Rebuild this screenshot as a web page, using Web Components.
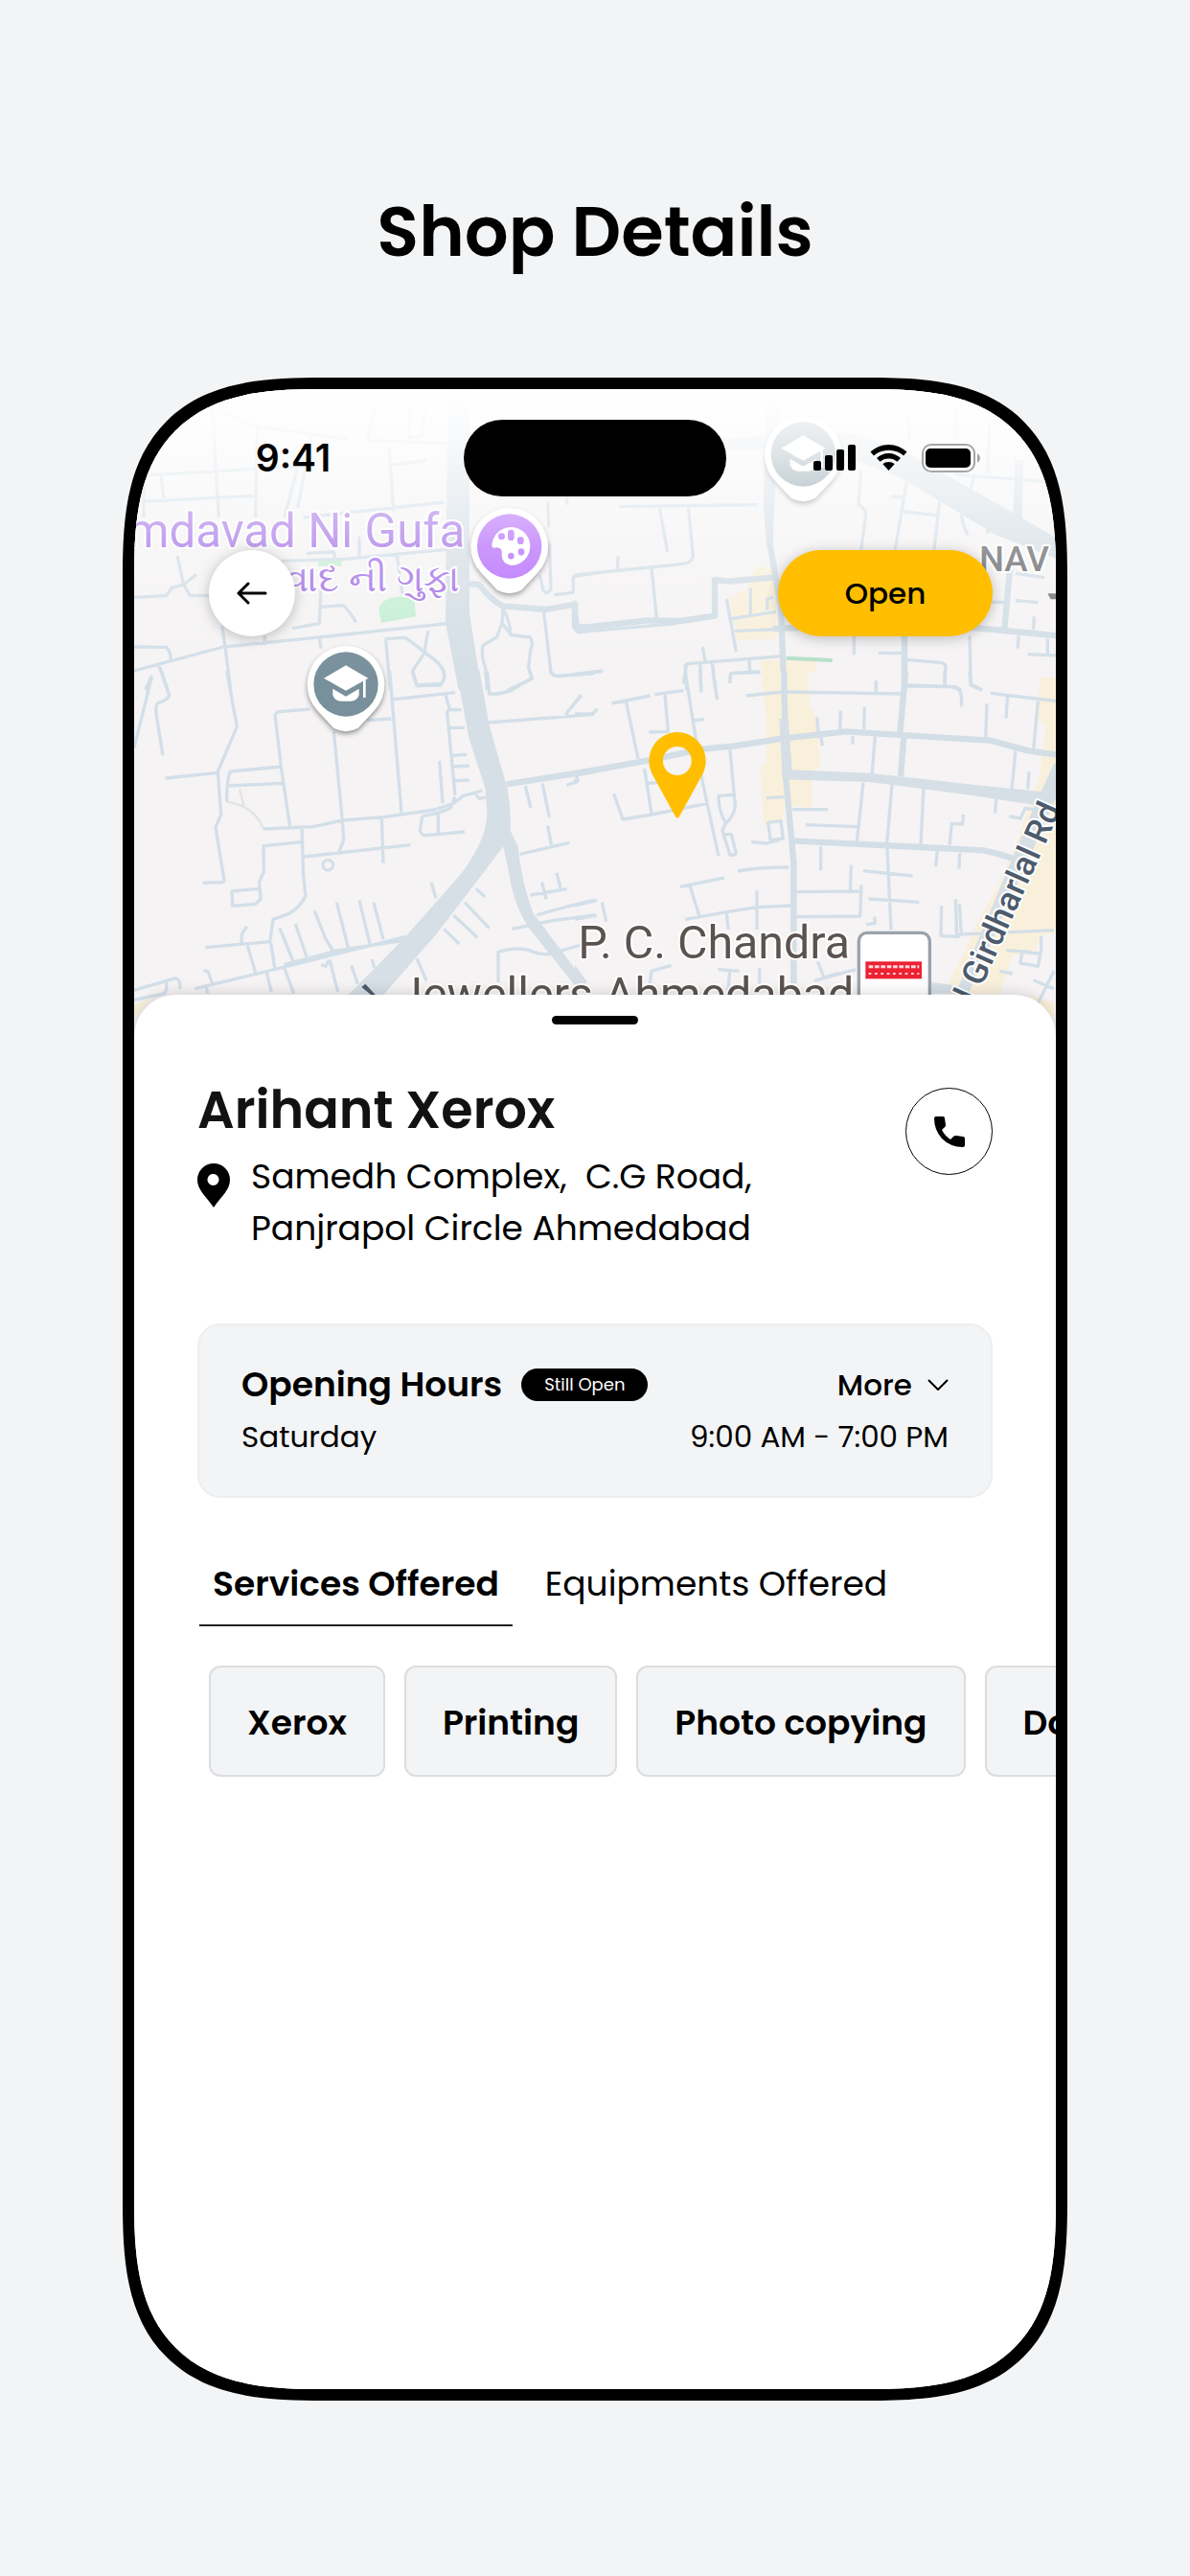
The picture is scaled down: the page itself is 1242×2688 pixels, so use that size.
<!DOCTYPE html>
<html lang="en">
<head>
<meta charset="utf-8">
<meta name="viewport" content="width=device-width, initial-scale=1">
<title>Shop Details</title>
<style>
  body {
    margin: 0;
    background: #f3f4f6;
    color: #000;
    font-family: Poppins, Inter, sans-serif;
  }
</style>
</head>
<body>

<shop-page>
  <span slot="title">Shop Details</span>
  <phone-frame>
    <map-hero>
      <status-bar slot="status" time="9:41"></status-bar>
      <back-button slot="start"></back-button>
      <open-pill slot="end">Open</open-pill>
    </map-hero>
    <bottom-sheet>
      <shop-header name="Arihant Xerox">
        <span>Samedh Complex,&nbsp; C.G Road,<br>Panjrapol Circle Ahmedabad</span>
      </shop-header>
      <hours-card day="Saturday" hours="9:00 AM - 7:00 PM" badge="Still Open"></hours-card>
      <tab-bar>
        <tab-item selected>Services Offered</tab-item>
        <tab-item>Equipments Offered</tab-item>
      </tab-bar>
      <chip-row>
        <service-chip>Xerox</service-chip>
        <service-chip>Printing</service-chip>
        <service-chip>Photo copying</service-chip>
        <service-chip>Do</service-chip>
      </chip-row>
    </bottom-sheet>
  </phone-frame>
</shop-page>

<script>
// Base: every element only gives its template
class BaseElement extends HTMLElement {
  connectedCallback(){
    if (this.shadowRoot) return;
    this.attachShadow({mode: 'open'});
    const template = document.createElement('template');
    template.innerHTML = `<style>* { box-sizing: border-box; } button { font: inherit; color: inherit; border: 0; margin: 0; cursor: pointer; } svg { display: block; }</style>${this.getTemplate()}`;
    this.shadowRoot.appendChild(template.content.cloneNode(true));
  }
}

// PAGE
class ShopPage extends BaseElement {
  getTemplate(){
    return `
    <style>
      :host {
        display: flex;
        flex-direction: column;
        box-sizing: border-box;
        min-height: 100vh;
        padding: 197px 128px 183px;
        gap: 107px;
      }
      h1 {
        margin: 0;
        text-align: center;
        font-size: 72px;
        line-height: 90px;
        font-weight: 600;
      }
      ::slotted(phone-frame) { flex: 1; }
    </style>
    <h1><slot name="title"></slot></h1>
    <slot></slot>
    `
  }
}
customElements.define('shop-page', ShopPage);

class PhoneFrame extends BaseElement {
  getTemplate(){
    return `
    <style>
      :host {
        display: flex;
        flex-direction: column;
        box-sizing: border-box;
        border: 12px solid #000;
        border-radius: 160px;
        background: #fff;
        overflow: hidden;
      }
      @supports (corner-shape: superellipse(1.5)) {
        :host {
          border-radius: 210px;
          corner-shape: superellipse(1.5);
        }
      }
    </style>
    <slot></slot>
    `
  }
}
customElements.define('phone-frame', PhoneFrame);

// MAP
class MapHero extends BaseElement {
  getTemplate(){
    return `
    <style>
      :host {
        display: block;
        position: relative;
        height: 680px;
      }
      city-map {
        position: absolute;
        inset: 0;
      }
      .over { position: relative; }
      .actions {
        display: flex;
        justify-content: space-between;
        margin-top: 56px;
        padding: 0 66px 0 78px;
      }
    </style>
    <city-map></city-map>
    <div class="over">
      <slot name="status"></slot>
      <div class="actions">
        <slot name="start"></slot>
        <slot name="end"></slot>
      </div>
    </div>
    `
  }
}
customElements.define('map-hero', MapHero);

class CityMap extends BaseElement {
  getTemplate(){
    return `
    <style>
      :host { display: block; background: #f5f3f4; overflow: hidden; }
      svg { width: 100%; height: 100%; }
      .road { fill: none; stroke: #d3dfe8; stroke-width: 10; stroke-linejoin: round; }
      .mid { fill: none; stroke: #d3dee6; stroke-width: 19; stroke-linejoin: round; }
      .main { fill: #d6dfe6; }
      .area { fill: #f9f0dc; }
      .park { fill: #c7efd5; }
      text { paint-order: stroke; stroke: #fff; stroke-width: 12; stroke-linejoin: round; font-family: Roboto, "Noto Sans", sans-serif; }
      .place { font-size: 145px; fill: #5b5350; }
      .art { font-size: 148px; fill: #a777e6; }
      .art-local { font-size: 118px; fill: #a777e6; font-weight: 500; }
      .district { font-size: 110px; fill: #6c6e72; font-weight: 500; }
      .street { font-size: 106px; fill: #4d5b6c; font-weight: 500; }
      .pin { filter: drop-shadow(0 8px 8px rgba(0, 0, 0, .4)); }
    </style>
    <svg viewBox="0 0 2886 2040" preserveAspectRatio="xMidYMid slice" role="img" aria-label="Map">
      <defs>
        <linearGradient id="fade" x1="0" y1="0" x2="0" y2="1">
          <stop offset="0" stop-color="#fff"/>
          <stop offset=".24" stop-color="#fff" stop-opacity=".74"/>
          <stop offset=".55" stop-color="#fff" stop-opacity=".28"/>
          <stop offset=".8" stop-color="#fff" stop-opacity=".08"/>
          <stop offset="1" stop-color="#fff" stop-opacity="0"/>
        </linearGradient>
        <path id="drop" fill="#fff" d="M-87 85 L-38 137 Q0 158 38 137 L87 85 A121 121 0 1 0 -87 85Z"/>
        <g id="school">
          <use href="#drop" class="pin"/>
          <circle r="101" fill="#78909c"/>
          <path fill="#fff" d="M-69 -19 L0 -59 L70 -19 L0 20Z M-41 14 L0 38 L41 14 V34 Q35 53 15 53 H-15 Q-35 53 -41 34Z M54 -16 H62 V42 H54Z"/>
        </g>
      </defs>

      <!-- top left -->
      <g transform="translate(-60 -78)">
        <path class="park" d="M636 614 L710 612 V632 H636Z M826 770 Q830 735 880 730 L936 722 L942 790 L834 810Z"/>
        <path class="road" d="M305 130 L325 480 M320 140 L440 195 L730 235 M445 190 L440 480 M60 350 L615 318 M145 350 L152 420 M90 360 V480 M90 430 L440 412 M615 230 L572 450 M570 330 L530 480 M858 265 L872 460 M866 315 L975 302 M590 480 L1030 432 M822 110 L790 238 L1040 248 M925 120 L920 230 L960 226 L972 120 M600 592 L685 588 L690 610 M765 540 V600 M520 616 L720 610 L1040 580 M882 590 L900 720 M1355 430 L1358 510 M1415 400 V440 M195 600 L215 690 L255 658 M215 690 L178 700 L160 725 L60 730 M215 690 L235 725 H300 M645 700 L640 812 L555 827 M645 760 L715 755 Q725 760 755 808 M60 885 L160 886 Q175 900 175 925 M60 960 L340 885 L640 855 L1040 812 M335 820 L345 885 L362 1020 M470 850 L466 880 M640 855 L645 890 M135 935 L165 1020 M115 975 L95 1020 M845 860 L910 856 L1000 925 Q1035 950 1030 985 L1020 1005 L945 1007 L932 960 L968 905 L980 835 M848 862 L862 1020 M1330 660 L1340 705 Q1350 725 1365 705 L1360 560 M1375 722 L1435 715 V665 L1500 655 M1215 765 L1212 810 L1240 848 L1300 855 Q1312 870 1300 900 L1295 950 L1306 985 L1230 1020 M1215 765 Q1235 800 1240 848 M1212 810 L1195 855 L1152 880 Q1145 910 1160 950 L1165 1020 M1342 770 L1365 965 Q1375 980 1395 976 L1500 968 M1437 755 V825 L1450 840 L1500 832"/>
        <path class="mid" d="M1105 688 L1140 690 Q1185 745 1215 757 L1350 768 L1440 752 V820 L1500 826"/>
        <path class="main" d="M1042 78 H1110 V780 L1148 1020 H1076 L1035 810Z"/>
      </g>

      <!-- top right -->
      <g transform="translate(1380 -78)">
        <path class="area" d="M566 636 L628 632 L632 860 L508 865 L484 735 L540 700Z M582 925 L755 930 V965 H728 V1020 H590Z M1455 985 H1506 V1020 H1455Z"/>
        <path stroke="#b5dfc9" stroke-width="12" d="M662 920 L806 927"/>
        <path class="road" d="M138 446 L570 440 M265 450 L290 588 M355 446 L370 600 Q365 622 340 625 L0 660 M135 602 L133 645 M240 638 L256 795 M0 740 L12 838 L320 812 M550 700 V785 M475 735 L505 900 M490 797 L630 775 M500 835 L640 830 M602 770 V735 L620 730 M400 885 L408 930 M340 1000 L350 938 L650 914 M345 940 L350 1020 M392 938 L395 1020 M430 935 L440 1020 M546 925 L548 965 M580 965 L488 968 L484 998 M0 970 L88 960 M874 840 V910 M950 904 L1030 905 M943 990 V1020 M896 330 L888 440 Q915 455 910 475 L896 585 M1046 150 L1048 240 M1040 360 L1002 585 M990 414 L1032 418 M1022 460 L1140 474 M1142 430 L1125 580 M1198 120 L1195 230 M1298 180 L1292 340 M1190 345 L1520 372 M1250 350 L1235 405 M1210 470 L1215 500 L1230 535 M1292 500 V530 M1380 655 L1470 668 M1300 745 H1345 M1380 740 L1450 746 M1438 790 L1436 830 M1390 850 L1386 890 M1480 860 V905 M1418 908 L1510 912 M1236 850 L1240 1005 L1275 1020 M1040 925 L1150 935 Q1165 940 1160 960 L1158 1010 M1040 1008 L1180 1010 L1210 1020"/>
        <path class="mid" d="M10 826 L230 802 L330 804 L438 788 V675 L480 680 L620 668 M600 380 L610 560 L645 760 L655 1020 M620 828 L1040 815 L1250 825 L1510 850 M1032 840 V1020 M1362 640 L1345 830"/>
        <path class="main" d="M400 236 L620 225 L850 215 L1020 265 L1380 470 L1510 545 V610 L1320 535 L1020 355 L850 290 L620 265 L400 268Z M1378 300 L1404 300 L1400 500 L1372 470Z M598 110 L640 105 L620 560 L600 560 L590 440Z"/>
      </g>

      <!-- bottom left -->
      <g transform="translate(-60 882)">
        <path class="road" d="M115 20 L60 240 M145 0 L170 78 Q165 92 135 100 Q125 110 130 140 L150 265 M350 0 L382 175 L322 315 L332 450 L315 490 L342 655 Q340 665 330 662 L275 664 M158 336 L322 319 M610 120 L515 128 Q500 130 502 145 L520 300 L548 490 M520 300 L362 315 Q350 335 350 410 M352 360 L528 352 M685 190 L712 470 M860 0 L897 445 M790 155 L865 150 M865 90 L1065 68 M1035 75 L1048 120 L1040 130 L1065 390 M1050 122 H1085 M1048 178 H1095 M1055 265 L1102 262 M1060 300 L1110 297 M1065 344 L1108 342 M1016 282 L1026 415 M465 495 L620 488 L712 468 L840 458 L1000 435 L1060 415 L1090 392 L1150 375 M1125 380 L1140 400 L1165 395 M962 455 L955 500 Q960 515 975 515 L1095 504 M1012 450 V510 M962 455 L1010 445 L1050 430 L1065 395 M835 462 L840 602 M712 470 L716 530 L700 570 M592 582 L925 545 M585 492 L590 640 L597 705 Q580 740 545 760 L495 778 L485 848 L282 866 M585 536 L465 548 L466 630 L452 660 L456 715 L440 730 L368 736 L366 690 L450 682 M413 800 L397 825 L396 855 M415 860 L440 945 M488 850 L500 930 M516 805 L558 910 M565 792 L600 895 M625 752 L660 840 L685 880 M694 725 L730 865 M765 718 L798 855 M810 725 L840 840 M250 995 L470 942 L700 885 L910 832 M530 920 L700 875 L900 845 M475 945 L490 1005 M530 930 L560 1010 M672 905 L698 1005 M740 922 L760 980 M805 903 L812 930 M645 920 L660 925 L670 905 M278 938 L292 942 L304 978 M60 1000 L180 965 Q205 955 204 995 M60 1030 L155 1010 Q165 1000 160 970 M285 985 L290 1010 M990 662 L1005 712 M1130 682 L1158 707 M1095 725 L1172 806 M1060 765 L1135 835 M1030 808 L1078 855 M945 900 L975 970 M1170 162 L1500 136 M1165 0 L1172 72 Q1200 75 1240 62 L1305 22 L1298 0 M930 0 L945 45 L1020 40 Q1035 30 1030 0 M1362 0 Q1370 16 1385 16 L1500 8 M1410 138 L1460 75 M1285 360 L1302 430 M1338 352 L1360 458 M1355 485 L1366 545 M1268 574 L1422 538 M1300 702 L1415 683 M1337 662 L1350 715 M1383 633 L1395 680 M1320 765 Q1400 740 1500 718 M1242 808 L1370 782 L1500 765 M1200 975 V880 Q1270 860 1310 880 Q1350 895 1390 878 L1460 858 M1414 358 Q1450 350 1448 325"/>
        <circle class="road" cx="667" cy="608" r="16"/>
        <path class="mid" d="M1225 355 L1500 312"/>
        <path class="main" d="M1068 -5 H1140 L1172 170 L1222 345 Q1240 400 1238 500 L1262 550 Q1272 660 1310 760 L1480 985 L1440 985 L1300 810 Q1250 740 1235 640 L1216 550 L1010 820 L840 1015 H730 L905 838 L1080 640 Q1165 530 1165 445 L1160 370 L1108 210Z"/>
        <path fill="none" stroke="#e3e3e3" stroke-width="7" d="M350 410 Q440 425 465 495 M390 370 L405 428"/>
        <path fill="#4d5b6c" d="M772 990 L784 980 L816 1015 H802Z"/>
        <path class="area" d="M60 1045 L110 1025 L70 1080 H60Z"/>
      </g>

      <!-- bottom right -->
      <g transform="translate(1380 882)">
        <path class="area" d="M582 0 H728 L735 110 L755 145 L770 305 L742 310 V430 L655 420 L650 470 L592 485 L580 300 L600 290 L598 140Z M1455 20 H1506 V820 L1460 830 L1440 880 L1370 890 L1330 1010 H1155 L1200 920 L1255 800 L1330 660 L1390 520 L1455 330 L1475 170 L1450 160Z M1420 1010 L1500 1040 V1090Z"/>
        <path class="road" d="M0 10 L85 2 M0 100 L20 78 M0 135 L50 134 Q65 132 68 118 M115 102 L235 78 M160 95 L198 275 M250 74 L340 62 M282 75 L292 190 L232 192 M345 0 L375 190 L400 350 L450 580 M392 0 L396 68 M432 0 L446 90 M372 155 L405 152 M485 38 L488 8 L580 2 M536 78 L650 66 L1030 72 M218 305 L240 448 M222 352 L275 350 M122 385 L150 465 L240 450 L415 415 M485 240 L502 420 Q500 455 470 480 L462 500 L485 575 Q500 580 505 570 L490 512 L465 512 M495 388 L450 392 Q450 440 472 475 M600 398 L655 395 M552 535 L600 540 L640 530 M605 475 L645 470 L652 525 L612 530Z M680 434 H792 M722 482 L885 488 M903 350 L883 535 M993 355 L977 540 L990 810 M1092 365 L1083 545 M1320 395 L1316 445 M940 205 L930 325 M832 125 L830 185 M907 112 L905 185 M758 145 L762 195 M770 205 L775 235 M870 205 V230 M943 30 V70 M1040 45 L1190 50 Q1215 55 1210 112 M1158 0 V45 M1235 0 L1240 42 L1275 60 M1302 70 L1510 95 M1355 75 L1350 148 M1290 102 L1286 212 M1450 95 L1436 245 M1380 250 L1368 370 M1422 315 L1418 370 M1216 450 L1214 480 L1180 478 L1173 545 M770 550 V625 M902 626 L1058 642 M865 608 L862 690 M690 692 L895 690 M897 670 L893 768 L690 770 M920 714 L1078 724 M1135 560 L1130 612 M1205 570 L1203 620 M510 627 Q570 615 670 615 M330 676 L468 648 M360 672 L392 775 M345 778 L475 755 L570 740 L680 735 M570 688 V810 M475 755 L480 810 M1148 735 L1146 830 L1200 832 L1210 822 L1204 730 M1192 715 L1196 830 M1205 825 L1500 812 M912 794 L940 790 L938 770 M85 725 L98 785 M0 735 L70 718 M0 778 L68 765 M232 1000 L240 940 L302 922 M448 935 L515 940 M485 938 L480 1000 M578 930 V980 M760 910 L780 960 L830 945 M750 970 L880 935 M1400 880 L1458 885 L1450 925 L1395 915Z M1350 875 L1430 880 M1460 830 V880 M1330 940 L1370 948 M1500 940 L1450 1040 M1435 968 L1500 995 M1215 920 L1250 930 M1360 455 L1395 462 L1410 430 L1440 435"/>
        <path class="mid" d="M0 322 L230 280 L400 245 L500 235 L650 212 L850 190 L1040 202 L1200 212 L1300 218 L1420 250 L1506 262 M655 0 L660 330 L685 600 V980 M1035 0 L1018 200 M1030 205 L1020 330 M0 340 L10 350 M680 532 L880 542 L1080 552 L1280 562 Q1330 572 1380 590"/>
        <path class="main" d="M640 150 H668 L680 310 L920 320 L1060 335 L1280 360 L1460 378 L1500 290 H1506 V400 L1230 1015 H1190 L1440 420 L1280 395 L1060 365 L920 348 L650 340Z M0 920 L40 975 H0Z M1115 975 L1190 985 V1010 H1115Z"/>
        <text class="place" x="861" y="900" text-anchor="end">P. C. Chandra</text>
        <text class="place" x="874" y="1062" text-anchor="end">Jewellers Ahmedabad</text>
        <text class="street" transform="translate(1252 1040) rotate(-66)">l Girdharlal Rd</text>
        <rect x="889" y="820" width="222" height="222" rx="26" fill="#fff" stroke="#9aa2aa" stroke-width="10"/>
        <rect x="910" y="910" width="176" height="54" fill="#ee2233"/>
        <path stroke="#ffd9dc" stroke-width="9" stroke-dasharray="14 5" d="M920 926 H1078"/>
        <path stroke="#ffd9dc" stroke-width="6" stroke-dasharray="8 11" d="M920 948 H1078"/>
      </g>

      <g transform="translate(-60 -78)">
        <text class="art" x="1096" y="574" text-anchor="end">Amdavad Ni Gufa</text>
        <text class="art-local" x="1080" y="710" text-anchor="end" lang="gu">દાવાદ ની ગુફા</text>
        <g transform="translate(1235 570)">
          <use href="#drop" class="pin"/>
          <circle r="101" fill="#b76ffb"/>
          <path fill="#fff" d="M-55 0 A60 60 0 1 1 8 60 Q-24 56 -24 28 Q-20 4 -40 4 Q-52 8 -55 0Z"/>
          <path stroke="#b76ffb" stroke-width="20" stroke-linecap="round" d="M-25 -31 H-24 M5 -42 V-28 M35 -20 V-16 M37 17 V19 M5 30 V31"/>
        </g>
        <use href="#school" x="723" y="1002"/>
      </g>
      <g transform="translate(1380 -78)">
        <text class="district" x="1266" y="647">NAV</text>
        <path fill="#777" d="M1480 718 H1506 V736 H1490Z"/>
        <use href="#school" x="715" y="282"/>
      </g>
      <rect width="2886" height="900" fill="url(#fade)"/>

      <!-- shop position -->
      <path fill="#ffbf00" fill-rule="evenodd" d="M1701 1074 A90 90 0 0 0 1622 1205 L1695 1338 Q1701 1348 1707 1338 L1780 1205 A90 90 0 0 0 1701 1074Z M1701 1119 a45 45 0 1 1 -1 0Z"/>
    </svg>
    `
  }
}
customElements.define('city-map', CityMap);

class StatusBar extends BaseElement {
  getTemplate(){
    return `
    <style>
      :host {
        display: grid;
        grid-template-columns: 1fr 274px 1fr;
        align-items: center;
        padding-top: 32px;
      }
      .time {
        padding-right: 12px;
        text-align: center;
        font: 600 39px/80px Inter, sans-serif;
      }
      .island {
        height: 80px;
        border-radius: 40px;
        background: #000;
      }
      .icons {
        display: flex;
        justify-content: center;
        gap: 15px;
        padding-left: 12px;
      }
    </style>
    <span class="time">${this.getAttribute('time')}</span>
    <span class="island"></span>
    <span class="icons">
      <svg width="44" height="30" viewBox="0 0 44 30" aria-label="Signal">
        <rect x="0" y="18" width="8" height="10" rx="2"/>
        <rect x="12" y="12" width="8" height="16" rx="2"/>
        <rect x="24" y="6" width="8" height="22" rx="2"/>
        <rect x="36" y="1" width="8" height="27" rx="2"/>
      </svg>
      <svg width="39" height="30" viewBox="0 0 39 30" aria-label="Wi-Fi">
        <path d="M19.500 1 C27 1 33.500 4 38.500 8.500 L35 12.500 C31 9 25.500 6.800 19.500 6.800 S8 9 4 12.500 L.5 8.500 C5.500 4 12 1 19.500 1Z"/>
        <path d="M19.500 10 C24.500 10 28.800 12 32 15 L28.400 18.800 C26 16.600 23 15.400 19.500 15.400 S13 16.600 10.600 18.800 L7 15 C10.200 12 14.500 10 19.500 10Z"/>
        <path d="M19.500 19 C22 19 24 19.800 25.600 21.300 L19.500 28 L13.400 21.300 C15 19.800 17 19 19.500 19Z"/>
      </svg>
      <svg width="62" height="30" viewBox="0 0 62 30" aria-label="Battery">
        <rect x="1" y="1" width="54" height="28" rx="9" fill="#fff" stroke="#a5a5a5" stroke-width="2"/>
        <rect x="4" y="5" width="47" height="20" rx="5"/>
        <path fill="#a5a5a5" d="M58 10 Q61 12 61 15 T58 20Z"/>
      </svg>
    </span>
    `
  }
}
customElements.define('status-bar', StatusBar);

class BackButton extends BaseElement {
  getTemplate(){
    return `
    <style>
      :host { display: block; }
      button {
        display: grid;
        place-items: center;
        width: 90px;
        height: 90px;
        padding: 0;
        border-radius: 50%;
        background: #fff;
        box-shadow: 0 2px 14px rgba(0, 0, 0, .24);
      }
    </style>
    <button type="button" aria-label="Back">
      <svg width="32" height="24" viewBox="0 0 32 24" fill="none" stroke="#000" stroke-width="3" stroke-linecap="round" stroke-linejoin="round">
        <path d="M30 12 H2 M12 2 L2 12 L12 22"/>
      </svg>
    </button>
    `
  }
}
customElements.define('back-button', BackButton);

class OpenPill extends BaseElement {
  getTemplate(){
    return `
    <style>
      :host { display: block; }
      button {
        width: 224px;
        height: 90px;
        padding: 0;
        border-radius: 45px;
        background: #ffbf00;
        font-size: 31px;
        font-weight: 500;
        box-shadow: 0 2px 14px rgba(0, 0, 0, .24);
      }
    </style>
    <button type="button"><slot></slot></button>
    `
  }
}
customElements.define('open-pill', OpenPill);

// SHEET
class BottomSheet extends BaseElement {
  getTemplate(){
    return `
    <style>
      :host {
        display: block;
        position: relative;
        flex: 1;
        margin-top: -48px;
        padding: 22px 66px 66px;
        border-radius: 44px 44px 0 0;
        background: #fff;
        box-shadow: 0 -2px 14px rgba(0, 0, 0, .14);
      }
      .handle {
        width: 90px;
        height: 9px;
        margin: 0 auto 54px;
        border-radius: 5px;
        background: #000;
      }
    </style>
    <div class="handle"></div>
    <slot></slot>
    `
  }
}
customElements.define('bottom-sheet', BottomSheet);

class ShopHeader extends BaseElement {
  getTemplate(){
    return `
    <style>
      :host {
        display: flex;
        justify-content: space-between;
        align-items: flex-start;
      }
      h2 {
        margin: 0 0 8px;
        font-size: 54px;
        line-height: 70px;
        font-weight: 600;
        color: #121212;
      }
      .address {
        display: flex;
        align-items: flex-start;
        gap: 22px;
        font-size: 36px;
        line-height: 54px;
      }
      .address svg { margin-top: 13px; }
      button {
        display: grid;
        place-items: center;
        width: 91px;
        height: 91px;
        margin-top: 12px;
        padding: 0;
        border: 1px solid #000;
        border-radius: 50%;
        background: #fff;
      }
    </style>
    <div>
      <h2>${this.getAttribute('name')}</h2>
      <div class="address">
        <svg width="34" height="46" viewBox="0 0 34 46"><path fill-rule="evenodd" d="M17 0 A17 17 0 0 0 0 17 C0 28 9 34 17 46 C25 34 34 28 34 17 A17 17 0 0 0 17 0Z M17 11 a6 6 0 1 1 -1 0Z"/></svg>
        <slot></slot>
      </div>
    </div>
    <button type="button" aria-label="Call">
      <svg width="32" height="32" viewBox="0 0 32 32"><path d="M2 0 H9 Q11 0 11 2 L12 9 Q12 11 10 12 L8 14 Q11 20 17 24 L20 21 Q21 20 23 20 L30 21 Q32 21 32 23 V30 Q32 32 30 32 Q17 32 8 23 Q0 14 0 2 Q0 0 2 0Z"/></svg>
    </button>
    `
  }
}
customElements.define('shop-header', ShopHeader);

class HoursCard extends BaseElement {
  getTemplate(){
    return `
    <style>
      :host {
        display: block;
        box-sizing: border-box;
        margin-top: 72px;
        padding: 35px 44px;
        border: 2px solid #eceef0;
        border-radius: 24px;
        background: #f3f4f6;
        font-size: 31px;
        line-height: 54px;
      }
      .row {
        display: flex;
        justify-content: space-between;
        align-items: center;
      }
      .title {
        display: flex;
        align-items: center;
        gap: 20px;
      }
      h3 {
        margin: 0;
        font-size: 36px;
        font-weight: 600;
      }
      .badge {
        padding: 0 24px;
        border-radius: 17px;
        background: #000;
        color: #fff;
        font-size: 18px;
        line-height: 34px;
      }
      button {
        display: flex;
        align-items: center;
        gap: 16px;
        padding: 0;
        background: none;
        font-weight: 500;
      }
    </style>
    <div class="row">
      <div class="title">
        <h3>Opening Hours</h3>
        <span class="badge">${this.getAttribute('badge')}</span>
      </div>
      <button type="button">More
        <svg width="22" height="12" viewBox="0 0 22 12" fill="none" stroke="#000" stroke-width="2"><path d="M1 1 L11 11 L21 1"/></svg>
      </button>
    </div>
    <div class="row">
      <span>${this.getAttribute('day')}</span>
      <span>${this.getAttribute('hours')}</span>
    </div>
    `
  }
}
customElements.define('hours-card', HoursCard);

class TabBar extends BaseElement {
  getTemplate(){
    return `
    <style>
      :host {
        display: flex;
        gap: 20px;
        margin: 60px 0 41px;
        padding-left: 2px;
      }
    </style>
    <slot></slot>
    `
  }
}
customElements.define('tab-bar', TabBar);

class TabItem extends BaseElement {
  getTemplate(){
    return `
    <style>
      :host { display: block; }
      button {
        display: block;
        padding: 3px 14px 15px;
        background: none;
        border-bottom: 2px solid transparent;
        font-size: 36px;
        line-height: 54px;
        white-space: nowrap;
      }
      :host([selected]) button {
        border-color: #222;
        font-weight: 600;
      }
    </style>
    <button type="button"><slot></slot></button>
    `
  }
}
customElements.define('tab-item', TabItem);

class ChipRow extends BaseElement {
  getTemplate(){
    return `
    <style>
      :host {
        display: flex;
        gap: 20px;
        margin-right: -66px;
        padding-left: 12px;
        overflow: hidden;
      }
    </style>
    <slot></slot>
    `
  }
}
customElements.define('chip-row', ChipRow);

class ServiceChip extends BaseElement {
  getTemplate(){
    return `
    <style>
      :host { display: block; flex: none; }
      button {
        display: block;
        padding: 32px 38px 28px;
        border: 2px solid #dcdddf;
        border-radius: 12px;
        background: #f3f4f6;
        font-size: 36px;
        line-height: 52px;
        font-weight: 600;
        white-space: nowrap;
      }
    </style>
    <button type="button"><slot></slot></button>
    `
  }
}
customElements.define('service-chip', ServiceChip);
</script>
</body>
</html>
